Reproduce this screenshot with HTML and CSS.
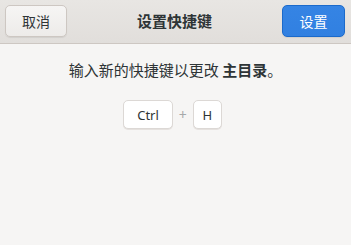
FILE: index.html
```html
<!DOCTYPE html>
<html>
<head>
<meta charset="utf-8">
<link rel="stylesheet" href="styles.css">
</head>
<body>
<div class="window">
  <header class="headerbar">
    <button class="btn">取消</button>
    <div class="title">设置快捷键</div>
    <button class="btn suggested">设置</button>
  </header>
  <main class="content">
    <p class="msg">输入新的快捷键以更改 <b>主目录</b>。</p>
    <div class="keys">
      <span class="key">Ctrl</span>
      <span class="plus">+</span>
      <span class="key single">H</span>
    </div>
  </main>
</div>
</body>
</html>
```
FILE: styles.css
```css
html, body {
  margin: 0;
  padding: 0;
  background: #f6f5f4;
}
.window {
  width: 351px;
  height: 245px;
  font-family: "Noto Sans", "Noto Sans CJK SC", sans-serif;
  color: #2e3436;
}
.headerbar {
  height: 44px;
  box-sizing: border-box;
  border-bottom: 1px solid #cdc7c2;
  background: linear-gradient(#e8e6e3, #e1dedb);
  display: flex;
  align-items: center;
  justify-content: space-between;
  padding: 0 6px 2px 5px;
}
.btn {
  width: 62px;
  height: 32px;
  border: 1px solid #cdc7c2;
  border-radius: 5px;
  background: linear-gradient(#f6f5f4, #edebe9);
  box-shadow: 0 1px 1px rgba(0,0,0,0.07);
  font-family: "Noto Sans CJK SC", sans-serif;
  font-size: 14px;
  color: #2e3436;
  padding: 0;
}
.btn.suggested {
  width: 63px;
  border-color: #1b6acb;
  background: linear-gradient(#3584e4, #3180e1);
  color: #ffffff;
}
.title {
  font-family: "Noto Sans CJK SC", sans-serif;
  font-weight: bold;
  font-size: 15px;
  color: #2e3436;
}
.content {
  display: flex;
  flex-direction: column;
  align-items: center;
}
.msg {
  margin: 15px 0 0 0;
  font-family: "Noto Sans CJK SC", sans-serif;
  font-size: 15px;
  line-height: 22px;
  color: #2e3436;
}
.msg b {
  font-weight: bold;
}
.keys {
  margin-top: 19px;
  margin-right: 6px;
  display: flex;
  align-items: center;
  gap: 5px;
}
.key {
  box-sizing: border-box;
  height: 29px;
  padding: 0 13px;
  display: flex;
  align-items: center;
  justify-content: center;
  background: #ffffff;
  border: 1px solid #dcd8d5;
  border-radius: 5px;
  box-shadow: 0 1px 0 #e5e1de;
  font-family: "Noto Sans", sans-serif;
  font-size: 13px;
  color: #2e3436;
}
.key.single {
  width: 29px;
  padding: 0;
}
.plus {
  font-family: "Noto Sans", sans-serif;
  font-size: 14px;
  color: #a6a9aa;
  padding: 0 1px;
}
```
